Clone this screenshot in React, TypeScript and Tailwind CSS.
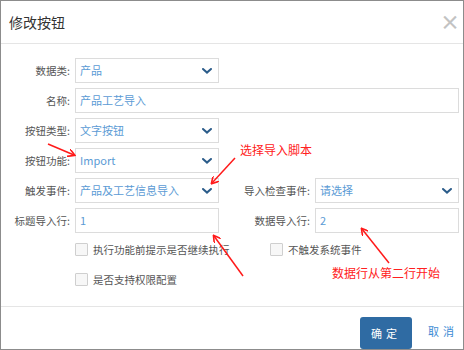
import React from 'react';

const FONT = { fontFamily: '"Microsoft YaHei", "Noto Sans CJK SC", "Noto Sans", sans-serif' };

const Chevron = () => (
  <svg width="10" height="6" viewBox="0 0 10 6" className="shrink-0">
    <path d="M1 1 L5 4.6 L9 1" fill="none" stroke="#2b5c8a" strokeWidth="2" strokeLinecap="round" />
  </svg>
);

const Select = ({ value, className = '' }: { value: string; className?: string }) => (
  <div className={`flex h-[25px] shrink-0 items-center justify-between border border-[#dcdcdc] bg-white pl-[4px] pr-[6px] text-[11px] text-[#5b9bd5] ${className}`}>
    <span>{value}</span>
    <Chevron />
  </div>
);

const Input = ({ value, className = '' }: { value: string; className?: string }) => (
  <div className={`flex h-[25px] shrink-0 items-center border border-[#dcdcdc] bg-white pl-[4px] text-[11px] text-[#5b9bd5] ${className}`}>
    {value}
  </div>
);

const Label = ({ text, className = 'w-[69px]' }: { text: string; className?: string }) => (
  <div className={`shrink-0 text-right text-[10.5px] text-[#555] ${className}`}>{text}</div>
);

const Check = ({ text }: { text: string }) => (
  <div className="flex items-center gap-[5px] text-[10.5px] text-[#555]">
    <span className="h-[13px] w-[13px] rounded-[1px] border border-[#cfcfcf] bg-[#f7f7f7]" />
    <span>{text}</span>
  </div>
);

export default function App() {
  return (
    <div style={FONT} className="relative flex h-[350px] w-[464px] flex-col overflow-hidden border border-[#8c8c8c] bg-white">
      {/* header */}
      <div className="flex h-[43px] shrink-0 items-center justify-between border-b border-[#e5e5e5] pl-[8px] pr-[3px]">
        <span className="text-[14px] text-[#333]">修改按钮</span>
        <span className="text-[20px] font-bold leading-none text-[#c3c3c3]">×</span>
      </div>

      {/* body */}
      <div className="flex flex-1 flex-col gap-[5px] pt-[14px]">
        <div className="flex items-center gap-[5px]">
          <Label text="数据类:" />
          <Select value="产品" className="w-[144px]" />
        </div>
        <div className="flex items-center gap-[5px]">
          <Label text="名称:" />
          <Input value="产品工艺导入" className="w-[384px]" />
        </div>
        <div className="flex items-center gap-[5px]">
          <Label text="按钮类型:" />
          <Select value="文字按钮" className="w-[144px]" />
        </div>
        <div className="flex items-center gap-[5px]">
          <Label text="按钮功能:" />
          <Select value="Import" className="w-[144px]" />
        </div>
        <div className="flex items-center gap-[5px]">
          <Label text="触发事件:" />
          <Select value="产品及工艺信息导入" className="w-[144px]" />
          <Label text="导入检查事件:" className="w-[86px]" />
          <Select value="请选择" className="w-[144px]" />
        </div>
        <div className="flex items-center gap-[5px]">
          <Label text="标题导入行:" />
          <Input value="1" className="w-[144px]" />
          <Label text="数据导入行:" className="w-[86px]" />
          <Input value="2" className="w-[144px]" />
        </div>

        <div className="mt-[4px] flex flex-col gap-[14px] pl-[74px]">
          <div className="flex">
            <div className="w-[195px]">
              <Check text="执行功能前提示是否继续执行" />
            </div>
            <Check text="不触发系统事件" />
          </div>
          <Check text="是否支持权限配置" />
        </div>
      </div>

      {/* footer */}
      <div className="flex h-[43px] shrink-0 items-end border-t border-[#e5e5e5] pl-[359px]">
        <button className="h-[32px] w-[52px] rounded-[3px] bg-[#2f6ba3] text-[11px] tracking-[4px] text-white">确定</button>
        <span className="mb-[10px] ml-[16px] text-[11px] tracking-[4px] text-[#3d8bd4]">取消</span>
      </div>

      {/* annotations */}
      <span className="absolute left-[239px] top-[140px] text-[12px] text-[#ff2020]">选择导入脚本</span>
      <span className="absolute left-[331px] top-[263px] text-[12px] text-[#ff2020]">数据行从第二行开始</span>
      <svg className="pointer-events-none absolute left-0 top-0" width="464" height="350">
        <defs>
          <marker id="ah" markerWidth="8" markerHeight="8" refX="6" refY="4" orient="auto" markerUnits="userSpaceOnUse">
            <path d="M0 0 L7 4 L0 8" fill="none" stroke="#ff1a1a" strokeWidth="1.6" />
          </marker>
        </defs>
        <g stroke="#ff1a1a" strokeWidth="1.5" fill="none" markerEnd="url(#ah)">
          <line x1="47" y1="143" x2="73" y2="154" />
          <line x1="234" y1="157" x2="211" y2="182" />
          <line x1="242" y1="275" x2="213" y2="235" />
          <line x1="388" y1="262" x2="361" y2="228" />
        </g>
      </svg>
    </div>
  );
}
